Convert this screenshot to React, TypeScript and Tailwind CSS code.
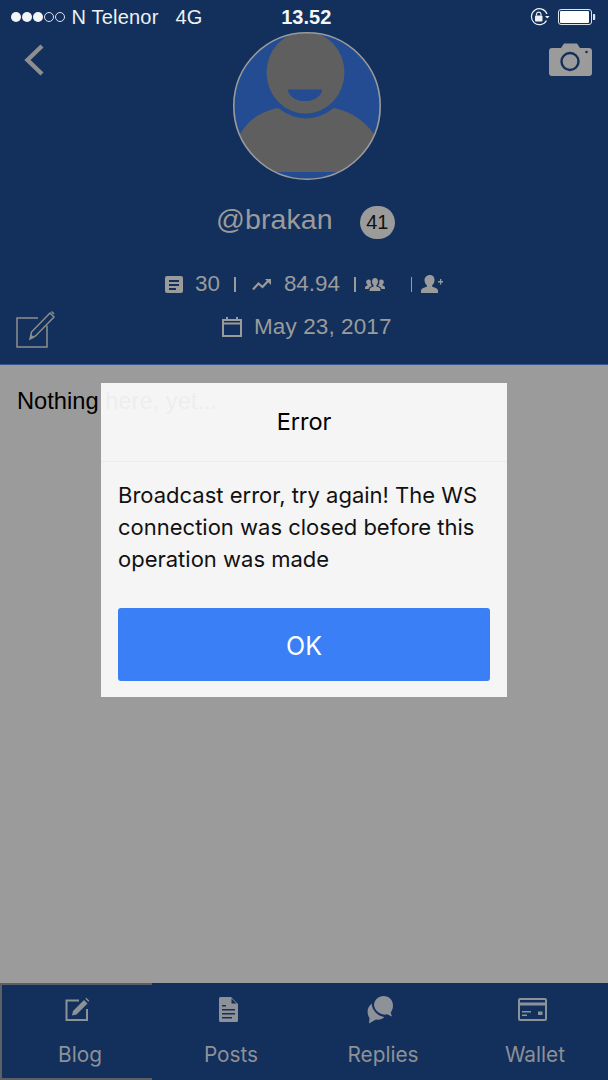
const sans = "font-['Liberation_Sans',Arial,sans-serif]";
const inter = "font-['Inter','Noto_Sans',sans-serif]";

function Dots() {
  return (
    <div className="flex gap-[1.5px]">
      {[0, 1, 2].map((i) => (
        <span key={i} className="w-[9.5px] h-[9.5px] rounded-full bg-[#f2f4f7]" />
      ))}
      {[3, 4].map((i) => (
        <span key={i} className="w-[9.5px] h-[9.5px] rounded-full border border-[#dfe3ea]" />
      ))}
    </div>
  );
}

function Lock() {
  return (
    <svg width="20" height="18" viewBox="0 0 20 18" fill="none">
      <path d="M17 6 A8 8 0 1 0 16.5 12.5" stroke="#eef0f4" strokeWidth="1.2" />
      <path d="M15 8h4.6l-2.3 2.6z" fill="#eef0f4" />
      <rect x="5" y="7.5" width="7.5" height="6" rx="1" fill="#eef0f4" />
      <path d="M6.5 7.5V6a2.3 2.3 0 0 1 4.5 0v1.5" stroke="#eef0f4" strokeWidth="1.2" />
    </svg>
  );
}

function Battery() {
  return (
    <svg width="38" height="16" viewBox="0 0 38 16" fill="none">
      <rect x="0.5" y="0.5" width="33" height="15" rx="2.5" stroke="#dfe3ea" />
      <rect x="2" y="2" width="29" height="12" rx="1" fill="#ffffff" />
      <path d="M35 5h1.2a1 1 0 0 1 1 1v4a1 1 0 0 1-1 1H35z" fill="#dfe3ea" />
    </svg>
  );
}

function Avatar() {
  return (
    <svg width="148" height="148" viewBox="0 0 148 148">
      <defs>
        <clipPath id="avatar-clip">
          <circle cx="74" cy="74" r="73" />
        </clipPath>
      </defs>
      <circle cx="74" cy="74" r="73" fill="#244c92" />
      <g clipPath="url(#avatar-clip)" fill="#5f5f5f">
        <ellipse cx="72.5" cy="40.5" rx="39" ry="41" />
        <path d="M45 76 Q73 97 101 76 C120 80 132 90 141 102 L148 140 L0 140 L7 102 C14 90 25 80 45 76Z" />
      </g>
      <path d="M55 57.5h34a17 11.5 0 0 1-34 0z" fill="#244c92" />
      <circle cx="74" cy="74" r="73.2" fill="none" stroke="#9b9b9b" strokeWidth="1.6" />
    </svg>
  );
}

function Camera() {
  return (
    <svg width="43" height="33" viewBox="0 0 43 33">
      <path
        d="M3 5h9l3-4.500h13L31 5h9a3 3 0 0 1 3 3v22a3 3 0 0 1-3 3H3a3 3 0 0 1-3-3V8a3 3 0 0 1 3-3z"
        fill="#9b9b9b"
      />
      <circle cx="21" cy="18.500" r="8.500" fill="none" stroke="#12305b" strokeWidth="2.400" />
      <circle cx="37.500" cy="9" r="1.300" fill="#12305b" />
    </svg>
  );
}

function Sep({ className }: { className: string }) {
  return <span className={`w-[2px] h-[15px] bg-[#9b9b9b] ${className}`} />;
}

function App() {
  return (
    <div className={`relative w-[608px] h-[1080px] flex flex-col overflow-hidden bg-[#9b9b9b] ${sans}`}>
      <header className="h-[365px] shrink-0 bg-[#12305b] border-b border-[#35568f] text-[#9b9b9b]">
        <div className="h-[32px] flex items-center pl-[11px] pr-[12px] text-[20px] text-[#eef0f4] pt-[2px]">
          <Dots />
          <span className="ml-[7px] tracking-[0.2px]">N Telenor</span>
          <span className="ml-[17px]">4G</span>
          <span className="ml-[79px] text-[20px] font-bold text-[#f4f5f7]">13.52</span>
          <span className="ml-auto"><Lock /></span>
          <span className="ml-[8px]"><Battery /></span>
        </div>

        <div className="flex items-start h-[148px]">
          <div className="w-[233px] pl-[24px] pt-[12px]">
            <svg width="20" height="32" viewBox="0 0 20 32" fill="none">
              <path d="M18 2 L3.500 16 L18 30" stroke="#8e8e8e" strokeWidth="4.400" />
            </svg>
          </div>
          <Avatar />
          <div className="flex-1 flex justify-end pr-[16px] pt-[11px]">
            <Camera />
          </div>
        </div>

        <div className="flex items-center pl-[216px] mt-[24px] h-[36px]">
          <span className="text-[28.5px] leading-none tracking-[0.1px] mb-[5px]">@brakan</span>
          <span className="ml-[27px] w-[35px] h-[33px] rounded-full bg-[#9b9b9b] text-[#111] text-[20px] flex items-center justify-center">
            41
          </span>
        </div>

        <div className="flex items-center pl-[165px] mt-[31px] h-[26px] text-[22.4px]">
          <svg width="18" height="17" viewBox="0 0 18 17">
            <path
              fillRule="evenodd"
              d="M2 0h14a2 2 0 0 1 2 2v13a2 2 0 0 1-2 2H2a2 2 0 0 1-2-2V2a2 2 0 0 1 2-2zM4 4v2h10V4zM4 8v2h10V8zM4 12v2h7v-2z"
              fill="#9b9b9b"
            />
          </svg>
          <span className="ml-[12px]">30</span>
          <Sep className="ml-[14px]" />
          <svg className="ml-[16px]" width="20" height="13" viewBox="0 0 20 13" fill="none">
            <path d="M1 11.500l5.500-6 4 3.500 6.500-7" stroke="#9b9b9b" strokeWidth="2.200" />
            <path d="M13 1h6v6z" fill="#9b9b9b" />
          </svg>
          <span className="ml-[12px]">84.94</span>
          <Sep className="ml-[14px]" />
          <svg className="ml-[9px]" width="20" height="15" viewBox="0 0 20 15">
            <path
              d="M10 1c2 0 3 1.600 3 3.600 0 1.700-.8 3-1.600 3.600v1.300c2 .6 4 1.300 4 3V14H4.600v-1.500c0-1.700 2-2.400 4-3V8.200C7.800 7.600 7 6.300 7 4.600 7 2.600 8 1 10 1z"
              fill="#9b9b9b"
            />
            <path d="M3.700 2.500c1 0 1.800.6 2.200 1.500-.5 1.600-.2 3.400.9 4.500v.5c-1.500.5-3 1.200-3.200 3H0v-1.400c0-1 1.500-1.600 2.500-2V7.500C1.600 7 1.200 6 1.200 5c0-1.500 1-2.500 2.500-2.500zM16.300 2.500c1.500 0 2.500 1 2.500 2.500 0 1-.4 2-1.300 2.500v1.100c1 .4 2.500 1 2.500 2V12h-3.600c-.2-1.800-1.700-2.500-3.200-3v-.5c1.100-1.100 1.400-2.900.9-4.500.4-.9 1.200-1.500 2.200-1.500z" fill="#9b9b9b" />
          </svg>
          <span className="ml-[26px] w-[1.5px] h-[15px] bg-[#9b9b9b]" />
          <svg className="ml-[9px]" width="22" height="18" viewBox="0 0 22 18">
            <path
              d="M9 0c3 0 4.500 2.300 4.500 5 0 2.400-1 4.300-2.300 5.200v1.500c2.800.8 5.800 1.800 5.800 4V18H0v-2.300c0-2.200 3-3.200 5.800-4v-1.500C4.500 9.300 3.500 7.400 3.500 5 3.500 2.300 6 0 9 0z"
              fill="#9b9b9b"
            />
            <path d="M17 6h2V4h1.300v2H22v1.500h-1.700v2H19v-2h-2z" fill="#9b9b9b" />
          </svg>
        </div>

        <div className="flex items-center pl-[16px] mt-[11px] h-[38px]">
          <svg className="mt-[4px]" width="40" height="38" viewBox="0 0 40 38" fill="none">
            <path d="M31 15.500V37H1V8h21" stroke="#8e8e8e" strokeWidth="1.500" />
            <path d="M14 29l1.500-7L34 3l4 4-18.500 19z" stroke="#8e8e8e" strokeWidth="1.500" />
            <path d="M35 2l1-1 2.500 2.500-1 1z" fill="#8e8e8e" />
            <path d="M14 29l1.200-4.500 3.300 3.200z" fill="#8e8e8e" />
          </svg>
          <svg className="ml-[166px]" width="20" height="20" viewBox="0 0 20 20" fill="none">
            <rect x="1" y="3" width="18" height="16" stroke="#9b9b9b" strokeWidth="2" />
            <path d="M1 6.500h18" stroke="#9b9b9b" strokeWidth="2" />
            <path d="M5 0v4M15 0v4" stroke="#9b9b9b" strokeWidth="2" />
          </svg>
          <span className="ml-[12px] text-[22.5px] tracking-[0.1px]">May 23, 2017</span>
        </div>
      </header>

      <main className="flex-1 pl-[17px] pt-[21px]">
        <p className="text-[23.7px] leading-[30px] text-black">Nothing here, yet...</p>
      </main>

      <nav className={`h-[97px] shrink-0 bg-[#12305b] flex text-[20.8px] text-[#8d9198] ${inter}`}>
        <Tab active label="Blog">
          <svg width="25" height="25" viewBox="0 0 25 25" fill="none">
            <path d="M22 12v11H1.500V3.500H14" stroke="#8d9198" strokeWidth="2" />
            <path d="M7 18.500l1-4.500L19 3l3.500 3.500L11.500 17.500z" fill="#8d9198" />
            <path d="M20.300 1.700l1-1 3 3-1 1z" fill="#8d9198" />
          </svg>
        </Tab>
        <Tab label="Posts">
          <svg width="19" height="25" viewBox="0 0 19 25">
            <path
              fillRule="evenodd"
              d="M1.500 0H12l7 7v16.500a1.500 1.500 0 0 1-1.500 1.500h-16A1.500 1.500 0 0 1 0 23.500v-22A1.500 1.500 0 0 1 1.500 0zM3 8v1.500h4V8zM3 12v1.500h13V12zM3 16v1.500h13V16zM3 20v1.500h10V20z"
              fill="#8d9198"
            />
            <path d="M12.500 1.500V6.500h5z" fill="#12305b" />
          </svg>
        </Tab>
        <Tab label="Replies">
          <svg width="27" height="28" viewBox="0 0 27 28">
            <path
              d="M16.500 0C22 0 26 4 26 9.500c0 2.800-.8 5-2.300 7l1.300 4-5-2.200c-1 .3-2 .4-3.500.3-5-.7-9.500-5-9.500-10C7.500 4 11.500 0 16.500 0z"
              fill="#8d9198"
            />
            <path
              d="M4.700 7.500c.2 6 5 12.200 12.500 13.500-1.800 2.200-5 3.300-8.300 2.500L2 27.500l.5-5.500C.2 18.500-1 12 4.700 7.500z"
              fill="#8d9198"
            />
          </svg>
        </Tab>
        <Tab label="Wallet">
          <svg width="29" height="23" viewBox="0 0 29 23">
            <path
              fillRule="evenodd"
              d="M2 0h25a2 2 0 0 1 2 2v19a2 2 0 0 1-2 2H2a2 2 0 0 1-2-2V2a2 2 0 0 1 2-2zM2 2v2.500h25V2zM2 7.500V21h25V7.500zM4 13h9v1.500H4zM4 16.500h5V18H4zM20 13.500h4.500V17H20z"
              fill="#8d9198"
            />
          </svg>
        </Tab>
      </nav>

      <div
        className={`absolute left-[101px] top-[383px] w-[406px] h-[314px] bg-[#fafafa]/95 flex flex-col ${inter}`}
      >
        <div className="h-[79px] flex items-center justify-center border-b border-[#ececec] text-[23.5px] text-black">
          Error
        </div>
        <p className="px-[17px] pt-[17px] h-[146px] text-[22px] leading-[32px] text-[#111]">
          Broadcast error, try again! The WS connection was closed before this operation was made
        </p>
        <button className="ml-[17px] mr-[17px] h-[73px] rounded-[3px] bg-[#3b7ff6] text-white text-[25px] pt-[4px]">OK</button>
      </div>
    </div>
  );
}

function Tab({ label, active, children }: { label: string; active?: boolean; children: React.ReactNode }) {
  return (
    <div
      className={`w-[152px] flex flex-col items-center ${
        active ? "border-2 border-r-0 border-[#5c5f63]" : ""
      }`}
    >
      <div className={`h-[27px] flex items-center justify-center ${active ? "mt-[11px]" : "mt-[13px]"}`}>{children}</div>
      <span className="ml-[6px] leading-[26px] mt-[19px]">{label}</span>
    </div>
  );
}

export default App;
